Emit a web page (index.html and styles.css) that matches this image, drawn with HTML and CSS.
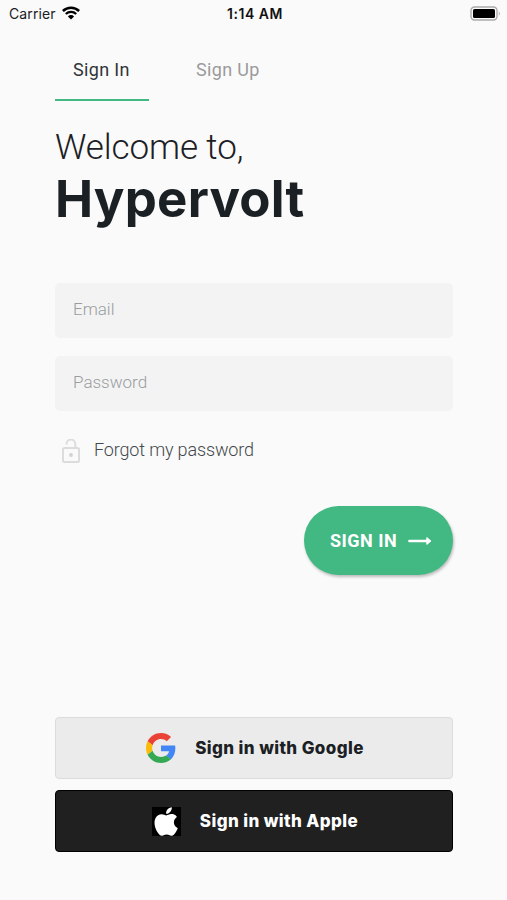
FILE: index.html
```html
<!DOCTYPE html>
<html lang="en">
<head>
    <meta charset="UTF-8">
    <meta name="viewport" content="width=device-width, initial-scale=1.0">
    <title>Hypervolt - Sign In</title>
    <link rel="stylesheet" href="styles.css">
</head>
<body>
    <div class="status-bar">
        <div class="carrier">
            <span>Carrier</span>
            <svg class="wifi" width="18" height="14" viewBox="0 0 18 14">
                <path d="M0.9 5 A11.6 11.6 0 0 1 17.1 5" fill="none" stroke="#000" stroke-width="2.5"/>
                <path d="M3.8 8 A7.5 7.5 0 0 1 14.2 8" fill="none" stroke="#000" stroke-width="2.3"/>
                <path d="M5.9 10.4 A4.4 4.4 0 0 1 12.1 10.4 L9 13.6 Z" fill="#000"/>
            </svg>
        </div>
        <span class="time">1:14 AM</span>
        <svg class="battery" width="31" height="16" viewBox="0 0 31 16">
            <rect x="1" y="1" width="26" height="13" rx="3.5" fill="#fafafa" stroke="#aaa" stroke-width="1.4"/>
            <rect x="3" y="3" width="22" height="9" rx="1.5" fill="#000"/>
            <path d="M28.8 5.2 Q30.8 7.5 28.8 9.8 Z" fill="#aaa"/>
        </svg>
    </div>

    <main class="login-container">
        <nav class="tabs">
            <a class="tab active">Sign In</a>
            <a class="tab">Sign Up</a>
        </nav>

        <h1><span class="welcome">Welcome to,</span> <span class="brand">Hypervolt</span></h1>

        <form class="login-form">
            <input type="email" placeholder="Email">
            <input type="password" placeholder="Password">
            <a class="forgot">
                <svg width="20" height="24" viewBox="0 0 20 24" fill="none" stroke="#dcdcdc" stroke-width="2">
                    <rect x="2" y="9" width="16" height="14" rx="1.5"/>
                    <path d="M5.5 5.5 V5 A4.4 4.4 0 0 1 14.3 5 V9"/>
                    <circle cx="10" cy="16" r="1.9" fill="#d2d2d2" stroke="none"/>
                </svg>
                <span>Forgot my password</span>
            </a>
            <button type="button" class="sign-in-button">
                <span>SIGN IN</span>
                <svg width="24" height="10" viewBox="0 0 24 10">
                    <path d="M1.4 5 H19" stroke="#fff" stroke-width="2.6" stroke-linecap="round"/>
                    <path d="M18.8 1.6 L23 5 L18.8 8.4 Z" fill="#fff" stroke="#fff" stroke-width="1" stroke-linejoin="round"/>
                </svg>
            </button>
        </form>

        <div class="social">
            <button type="button" class="social-button google">
                <svg width="30" height="30" viewBox="0 0 48 48">
                    <path fill="#EA4335" d="M24 9.5c3.54 0 6.71 1.22 9.21 3.6l6.85-6.85C35.9 2.38 30.47 0 24 0 14.62 0 6.51 5.38 2.56 13.22l7.98 6.19C12.43 13.72 17.74 9.5 24 9.5z"/>
                    <path fill="#4285F4" d="M46.98 24.55c0-1.57-.15-3.09-.38-4.55H24v9.02h12.94c-.58 2.96-2.26 5.48-4.78 7.18l7.73 6c4.51-4.18 7.09-10.36 7.09-17.65z"/>
                    <path fill="#FBBC05" d="M10.53 28.59c-.48-1.45-.76-2.99-.76-4.59s.27-3.14.76-4.59l-7.98-6.19C.92 16.46 0 20.12 0 24c0 3.88.92 7.54 2.56 10.78l7.97-6.19z"/>
                    <path fill="#34A853" d="M24 48c6.48 0 11.93-2.13 15.89-5.81l-7.73-6c-2.15 1.45-4.92 2.3-8.16 2.3-6.26 0-11.57-4.22-13.47-9.91l-7.98 6.19C6.51 42.62 14.62 48 24 48z"/>
                </svg>
                <span>Sign in with Google</span>
            </button>
            <button type="button" class="social-button apple">
                <svg width="29" height="29" viewBox="0 0 29 29">
                    <rect width="29" height="29" fill="#000"/>
                    <path transform="translate(-3 -2.7) scale(1.43)" fill="#fff" d="M18.71 19.5c-.83 1.24-1.71 2.45-3.05 2.47-1.34.03-1.77-.79-3.29-.79-1.53 0-2 .77-3.27.82-1.31.05-2.3-1.32-3.14-2.53C4.25 17 2.94 12.45 4.7 9.39c.87-1.52 2.43-2.48 4.12-2.51 1.28-.02 2.5.87 3.29.87.78 0 2.26-1.07 3.81-.91.65.03 2.47.26 3.64 1.98-.09.06-2.17 1.28-2.15 3.81.03 3.02 2.65 4.03 2.68 4.04-.03.07-.42 1.44-1.38 2.83M13 3.5c.73-.83 1.94-1.46 2.94-1.5.13 1.17-.34 2.35-1.04 3.19-.69.85-1.83 1.51-2.95 1.42-.15-1.15.41-2.35 1.05-3.11z"/>
                </svg>
                <span>Sign in with Apple</span>
            </button>
        </div>
    </main>
</body>
</html>
```

FILE: styles.css
```css
* {
    box-sizing: border-box;
}

body {
    font-family: Roboto, Inter, sans-serif;
    margin: 0;
    height: 900px;
    background-color: #fafafa;
    color: #1b2024;
    overflow: hidden;
}

.status-bar {
    display: grid;
    grid-template-columns: 1fr auto 1fr;
    align-items: center;
    height: 27px;
    padding: 0 6px 0 9px;
    font-family: Inter, sans-serif;
    font-size: 14px;
    line-height: 27px;
}

.carrier {
    display: flex;
    align-items: center;
    gap: 6px;
    letter-spacing: 0.1px;
}

.wifi {
    margin-top: -2px;
}

.time {
    color: #111;
    font-weight: 600;
    letter-spacing: 0.5px;
}

.battery {
    justify-self: end;
}

.login-container {
    width: 398px;
    margin-left: 55px;
}

.tabs {
    display: flex;
    gap: 29px;
    height: 74px;
}

.tab {
    height: 74px;
    padding: 32px 18px 0;
    border-bottom: 2px solid transparent;
    color: #9b9b9b;
    font-size: 18px;
    letter-spacing: 0.35px;
    line-height: 22px;
    white-space: nowrap;
}

.tab.active {
    width: 94px;
    border-bottom-color: #42b883;
    color: #303438;
}

h1 {
    margin: 25px 0 0;
    font-weight: 300;
}

.welcome,
.brand {
    display: block;
    white-space: nowrap;
}

.welcome {
    font-size: 35px;
    letter-spacing: -0.1px;
    line-height: 44px;
}

.brand {
    font-family: Inter, sans-serif;
    font-size: 51px;
    font-weight: 650;
    letter-spacing: 0.2px;
    line-height: 58px;
}

.login-form {
    display: flex;
    flex-direction: column;
    margin-top: 55px;
}

input {
    height: 55px;
    margin-bottom: 18px;
    padding: 0 18px 4px;
    border: none;
    border-radius: 5px;
    background-color: #f3f3f3;
    font-family: Roboto, sans-serif;
    font-size: 17px;
    font-weight: 300;
}

input::placeholder {
    color: #999da0;
    opacity: 1;
}

.forgot {
    display: flex;
    align-items: center;
    gap: 13px;
    height: 26px;
    margin-top: 9px;
    padding-left: 6px;
    color: #44484b;
    font-size: 18px;
    font-weight: 300;
    letter-spacing: -0.15px;
}

.forgot span {
    padding-bottom: 3px;
}

.sign-in-button {
    display: flex;
    align-items: center;
    align-self: flex-end;
    gap: 11px;
    width: 149px;
    height: 69px;
    margin-top: 42px;
    padding: 0 0 0 26px;
    border: none;
    border-radius: 35px;
    background-color: #42b883;
    box-shadow: 1px 2px 3px rgba(0, 0, 0, 0.25);
    color: white;
    font-family: Roboto, sans-serif;
    font-size: 18px;
    font-weight: 700;
    letter-spacing: 0.5px;
}

.social {
    display: flex;
    flex-direction: column;
    gap: 11px;
    margin-top: 142px;
}

.social-button {
    display: flex;
    align-items: center;
    justify-content: center;
    gap: 19px;
    height: 62px;
    padding: 0 0 0 2px;
    border: 1px solid #dcdcdc;
    border-radius: 4px;
    background-color: #ebebeb;
    color: #1b2024;
    font-family: Inter, sans-serif;
    font-size: 17px;
    font-weight: 800;
    letter-spacing: 0.4px;
}

.social-button.apple {
    border-color: #000;
    background-color: #202020;
    color: white;
}
```
